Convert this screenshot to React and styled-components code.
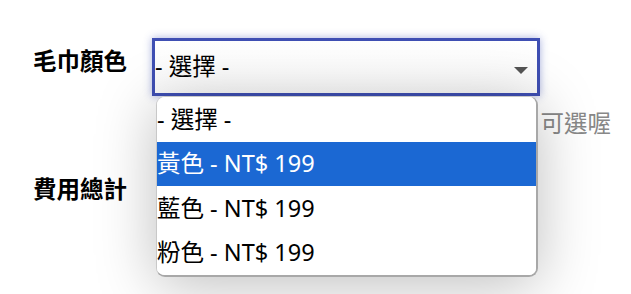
import React from 'react';
import styled, { createGlobalStyle } from 'styled-components';

const GlobalStyle = createGlobalStyle`
  body {
    margin: 0;
    background: #fff;
    font-family: "Noto Sans", "Noto Sans CJK TC", sans-serif;
    color: #000;
  }
`;

const Form = styled.div`
  padding: 38px 0 0 33px;
  width: 631px;
  height: 294px;
  box-sizing: border-box;
  overflow: hidden;
`;

const Row = styled.div`
  display: flex;
  align-items: flex-start;
`;

const Label = styled.div`
  width: 119px;
  flex-shrink: 0;
  margin-top: ${p => p.offset || 0}px;
  font-size: 23.5px;
  font-weight: 700;
  line-height: 34px;
`;

const SelectWrap = styled.div`
  position: relative;
  width: 388px;
`;

const SelectBox = styled.div`
  height: 58px;
  box-sizing: border-box;
  border: 3px solid #3f4fb3;
  box-shadow: 0 0 8px rgba(63, 79, 179, 0.45);
  background: linear-gradient(#fff, #fafafa);
  display: flex;
  align-items: center;
  justify-content: space-between;
  padding: 0 9px 0 0;
  font-size: 23.5px;
  line-height: 1;
`;

const Caret = styled.span`
  width: 0;
  height: 0;
  border-left: 7px solid transparent;
  border-right: 7px solid transparent;
  border-top: 7px solid #555;
  margin-top: 6px;
`;

const Hint = styled.div`
  margin: 10px 0 0 390px;
  font-size: 23.5px;
  line-height: 34px;
  color: #888;
  white-space: nowrap;
`;

const Menu = styled.ul`
  position: absolute;
  top: 58px;
  left: 4px;
  width: 382px;
  box-sizing: border-box;
  margin: 0;
  padding: 0;
  list-style: none;
  background: #fff;
  border: 1px solid #c8c8c8;
  border-right: 2px solid #a8a8a8;
  border-bottom: 2px solid #a8a8a8;
  border-radius: 9px;
  overflow: hidden;
  box-shadow: 0 8px 60px rgba(0, 0, 0, 0.26);
  z-index: 2;
`;

const Option = styled.li`
  height: 44.5px;
  display: flex;
  align-items: center;
  font-size: 23.5px;
  line-height: 1;
  background: ${p => (p.active ? '#1b68d3' : '#fff')};
  color: ${p => (p.active ? '#fff' : '#000')};
`;

const options = ['- 選擇 -', '黃色 - NT$ 199', '藍色 - NT$ 199', '粉色 - NT$ 199'];

export default function App() {
  return (
    <>
      <GlobalStyle />
      <Form>
        <Row>
          <Label offset={6}>毛巾顏色</Label>
          <SelectWrap>
            <SelectBox>
              <span>- 選擇 -</span>
              <Caret />
            </SelectBox>
            <Menu>
              {options.map((o, i) => (
                <Option key={i} active={i === 1}>{o}</Option>
              ))}
            </Menu>
          </SelectWrap>
        </Row>
        <Hint>多種顏色　可選喔</Hint>
        <Row>
          <Label offset={32}>費用總計</Label>
        </Row>
      </Form>
    </>
  );
}
